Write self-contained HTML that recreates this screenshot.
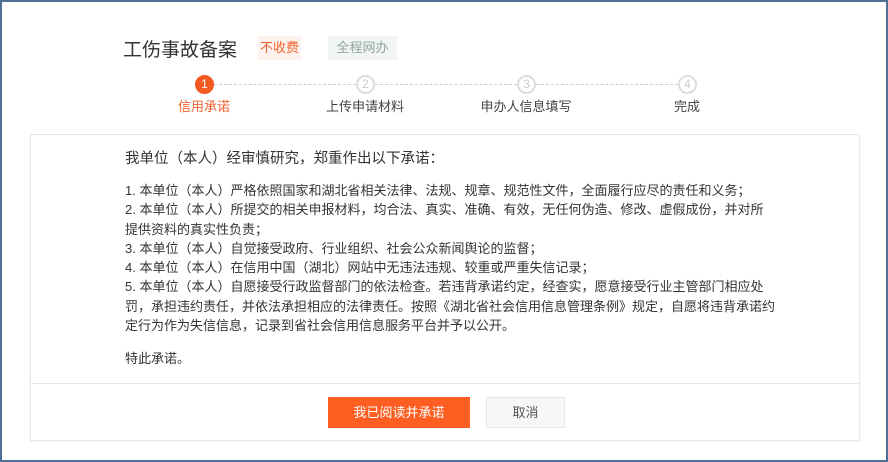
<!DOCTYPE html>
<html><head><meta charset="utf-8"><style>
*{margin:0;padding:0;box-sizing:border-box}
body{width:888px;height:462px;overflow:hidden;background:#fff;font-family:"Liberation Sans","Noto Sans CJK SC",sans-serif;position:relative}
.frame{position:absolute;left:0;top:0;width:888px;height:462px;border:2px solid #4d6f98;}
.title{position:absolute;left:123px;top:35px;font-size:19px;color:#333}
.tag{position:absolute;top:36px;height:24px;line-height:24px;font-size:13px;text-align:center}
.t1{left:258px;width:43px;background:#fdf2ee;color:#f0622f}
.t2{left:328px;width:69px;background:#f1f5f3;color:#8ea59a}
.line{position:absolute;top:84px;height:0;border-top:1px dashed #ccc}
.c{position:absolute;top:75px;width:19px;height:19px;border-radius:50%;border:2px solid #ddd;background:#fff;color:#ccc;font-size:12px;text-align:center;line-height:15px}
.c.a{background:#f25a22;border-color:#f25a22;color:#fff}
.l{position:absolute;top:96px;font-size:13px;color:#444;transform:translateX(-50%);white-space:nowrap}
.card{position:absolute;left:30px;top:134px;width:830px;height:307px;border:1px solid #e4e8ee;box-shadow:0 1px 2px rgba(0,0,0,.05)}
.txt{position:absolute;left:94px;top:14px;font-size:13px;color:#333;line-height:19.3px;white-space:nowrap}
.h{font-size:14.5px;margin-bottom:12px;line-height:20px}
.foot{position:absolute;left:0;right:0;top:248px;border-top:1px solid #e6e9ee}
.b1{position:absolute;left:297px;top:262px;width:142px;height:31px;background:#fe5e22;color:#fff;font-size:13px;text-align:center;line-height:31px}
.b2{position:absolute;left:455px;top:262px;width:79px;height:31px;background:#f6f7f9;border:1px solid #e3e5e9;color:#555;font-size:13px;text-align:center;line-height:29px}
</style></head><body>
<div class="frame"></div>
<div class="title">工伤事故备案</div>
<div class="tag t1">不收费</div>
<div class="tag t2">全程网办</div>
<div class="line" style="left:214px;width:142px"></div>
<div class="line" style="left:375px;width:142px"></div>
<div class="line" style="left:536px;width:142px"></div>
<div class="c a" style="left:195px">1</div>
<div class="c" style="left:356px">2</div>
<div class="c" style="left:517px">3</div>
<div class="c" style="left:678px">4</div>
<div class="l" style="left:204px;color:#f0622f">信用承诺</div>
<div class="l" style="left:365px">上传申请材料</div>
<div class="l" style="left:526px">申办人信息填写</div>
<div class="l" style="left:687px">完成</div>
<div class="card">
<div class="txt">
<div class="h">我单位（本人）经审慎研究，郑重作出以下承诺：</div>
1. 本单位（本人）严格依照国家和湖北省相关法律、法规、规章、规范性文件，全面履行应尽的责任和义务；<br>
2. 本单位（本人）所提交的相关申报材料，均合法、真实、准确、有效，无任何伪造、修改、虚假成份，并对所<br>
提供资料的真实性负责；<br>
3. 本单位（本人）自觉接受政府、行业组织、社会公众新闻舆论的监督；<br>
4. 本单位（本人）在信用中国（湖北）网站中无违法违规、较重或严重失信记录；<br>
5. 本单位（本人）自愿接受行政监督部门的依法检查。若违背承诺约定，经查实，愿意接受行业主管部门相应处<br>
罚，承担违约责任，并依法承担相应的法律责任。按照《湖北省社会信用信息管理条例》规定，自愿将违背承诺约<br>
定行为作为失信信息，记录到省社会信用信息服务平台并予以公开。<br>
<div style="height:14px"></div>
特此承诺。
</div>
<div class="foot"></div>
<div class="b1">我已阅读并承诺</div>
<div class="b2">取消</div>
</div>
</body></html>
